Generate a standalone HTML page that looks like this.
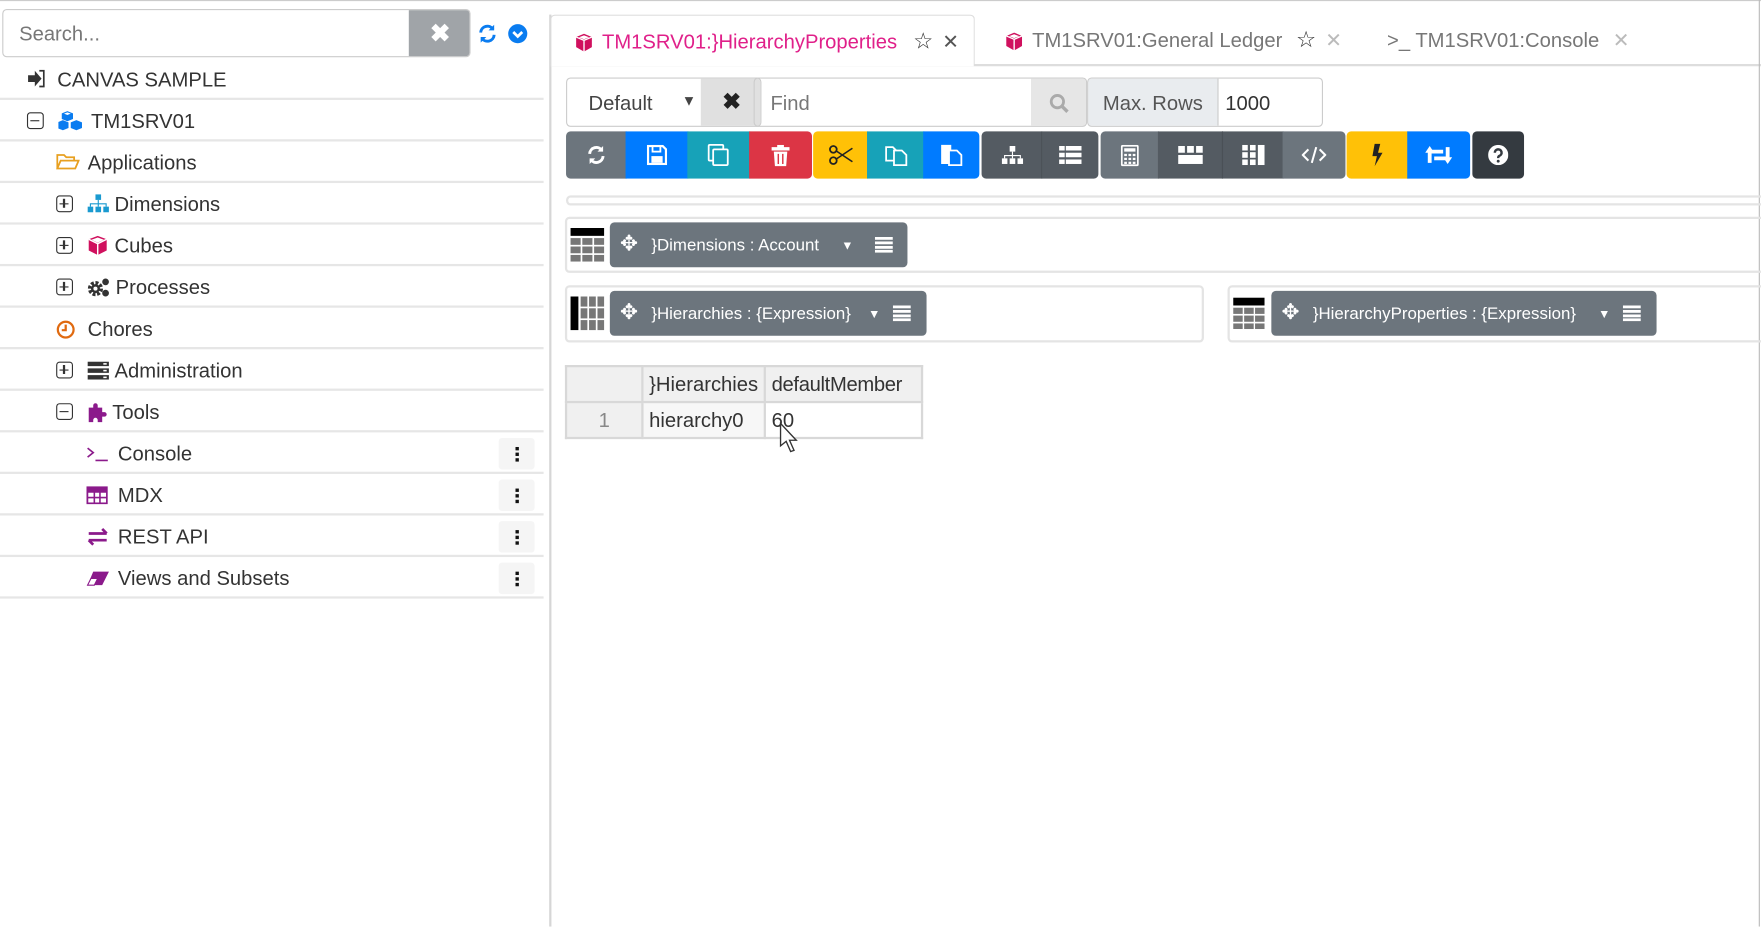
<!DOCTYPE html>
<html><head><meta charset="utf-8"><style>
*{box-sizing:border-box;margin:0;padding:0}
html,body{width:1761px;height:926px;overflow:hidden;background:#fff;font-family:"Liberation Sans",sans-serif;color:#333}
#w{position:absolute;left:0;top:0;width:1568px;height:825px;transform:scale(1.12309);transform-origin:0 0}
.a{position:absolute}
.row{position:absolute;left:0;width:484px;height:37px;border-bottom:2px solid #e6e6e6;font-size:18px;line-height:35px;color:#333}
.row .t{position:absolute;top:2px}
.pm{position:absolute;top:11px;width:15px;height:15px;border:1.5px solid #333;border-radius:3px}
.pm:before{content:"";position:absolute;left:2px;top:5.5px;width:8px;height:1.5px;background:#333}
.pm.p:after{content:"";position:absolute;left:5.3px;top:2px;width:1.5px;height:8px;background:#333}
.dots{position:absolute;left:444px;top:5px;width:32px;height:28px;background:#f5f5f5;border-radius:3px}
.dots i{position:absolute;left:14.5px;width:3px;height:3px;background:#111}
.tab{position:absolute;top:13px;height:45px;font-size:18px;line-height:46px;color:#777}
.btn{position:absolute;top:117px;height:42px;display:flex;align-items:center;justify-content:center}
.pill{position:absolute;background:#6c757d;border-radius:4px;color:#fff;font-size:15px;height:40px;line-height:42px}
.box{position:absolute;border:2px solid #e4e4e4;border-radius:4px}
td{border:2px solid #d8d8d8;font-size:18px;height:32px;padding:0 5px;color:#333}
</style></head><body><div id="w">
<div class="a" style="left:0;top:0;width:1568px;height:1px;background:#ccc"></div>
<div class="a" style="left:2px;top:8px;width:417px;height:43px;border:1.5px solid #ccc;border-radius:4px;overflow:hidden">
 <div class="a" style="left:14px;top:1px;line-height:40px;font-size:18px;color:#777">Search...</div>
 <div class="a" style="left:361px;top:0;width:56px;height:42px;background:#a0a4a8;color:#fff;font-size:22px;line-height:42px;text-align:center;font-weight:bold">✖</div>
</div>
<svg class="a" style="left:425px;top:21px" width="18" height="18" viewBox="0 0 18 18"><path d="M3 8a6 6 0 0 1 11-3M15 10a6 6 0 0 1-11 3" fill="none" stroke="#0a7cf0" stroke-width="2.6"/><path d="M15 1v5h-5zM3 17v-5h5z" fill="#0a7cf0"/></svg>
<svg class="a" style="left:452px;top:21px" width="18" height="18"><circle cx="9" cy="9" r="8.5" fill="#0a7cf0"/><path d="M5 7.5l4 4 4-4" stroke="#fff" stroke-width="2.4" fill="none"/></svg>
<div class="row" style="top:52px"><svg class="a" style="left:24px;top:10px" width="16" height="16"><path d="M1 5h6V1l6 7-6 7v-4H1z" fill="#333"/><path d="M11 1h4v14h-4" fill="none" stroke="#333" stroke-width="1.5"/></svg><span class="t" style="left:51px">CANVAS SAMPLE</span></div>
<div class="row" style="top:89px"><span class="pm" style="left:24px"></span><svg class="a" style="left:52px;top:9px" width="24" height="20"><g fill="#0a7cf0"><path d="M8 1l5 2v5l-5 2-5-2V3z"/><path d="M4 9l5 2v5l-5 2-5-2v-5z"/><path d="M16 9l5 2v5l-5 2-5-2v-5z"/></g><g fill="#fff"><path d="M5 3.2l3 1.2 3-1.2-3-1.1z"/></g></svg><span class="t" style="left:81px">TM1SRV01</span></div>
<div class="row" style="top:126px"><svg class="a" style="left:50px;top:10px" width="21" height="16"><path d="M1 14V2h6l2 2h7v3M1 14l3-7h16l-3 7z" fill="none" stroke="#e8a020" stroke-width="1.6"/></svg><span class="t" style="left:78px">Applications</span></div>
<div class="row" style="top:163px"><span class="pm p" style="left:50px"></span><svg class="a" style="left:78px;top:10px" width="19" height="17"><g fill="#1a9ad0"><rect x="7" y="0" width="5" height="5"/><rect x="0" y="11" width="5" height="5"/><rect x="7" y="11" width="5" height="5"/><rect x="14" y="11" width="5" height="5"/><path d="M9 5h1v3h7v3h-1V9h-6v2H9V9H3v2H2V8h7z"/></g></svg><span class="t" style="left:102px">Dimensions</span></div>
<div class="row" style="top:200px"><span class="pm p" style="left:50px"></span><svg class="a" style="left:78px;top:9px" width="18" height="19"><path d="M9 1l8 3v10l-8 4-8-4V4z" fill="#d0105e"/><path d="M9 8l8-4M9 8L1 4M9 8v10" stroke="#fff" stroke-width="1.3" fill="none"/><path d="M9 2.5l5.5 2L9 7 3.5 4.5z" fill="#fff"/></svg><span class="t" style="left:102px">Cubes</span></div>
<div class="row" style="top:237px"><span class="pm p" style="left:50px"></span><svg class="a" style="left:78px;top:9px" width="22" height="20"><circle cx="7" cy="11" r="5" fill="none" stroke="#333" stroke-width="3.5" stroke-dasharray="2.5 1.4"/><circle cx="7" cy="11" r="4" fill="#333"/><circle cx="7" cy="11" r="1.8" fill="#fff"/><circle cx="16" cy="5" r="3" fill="#333"/><circle cx="16" cy="15" r="3" fill="#333"/></svg><span class="t" style="left:103px">Processes</span></div>
<div class="row" style="top:274px"><svg class="a" style="left:50px;top:11px" width="17" height="17"><circle cx="8.5" cy="8.5" r="7" fill="none" stroke="#e06a10" stroke-width="2"/><path d="M8.5 4v5H5" stroke="#e06a10" stroke-width="2" fill="none"/></svg><span class="t" style="left:78px">Chores</span></div>
<div class="row" style="top:311px"><span class="pm p" style="left:50px"></span><svg class="a" style="left:78px;top:11px" width="19" height="16"><g fill="#333"><rect width="19" height="4"/><rect y="6" width="19" height="4"/><rect y="12" width="19" height="4"/></g><g fill="#fff"><rect x="14" y="1.3" width="3" height="1.4"/><rect x="14" y="7.3" width="3" height="1.4"/><rect x="14" y="13.3" width="3" height="1.4"/></g></svg><span class="t" style="left:102px">Administration</span></div>
<div class="row" style="top:348px"><span class="pm" style="left:50px"></span><svg class="a" style="left:78px;top:10px" width="20" height="18"><path d="M1 5h4V3a2 2 0 1 1 4 0v2h4v4h2a2 2 0 1 1 0 4h-2v5H9v-2a2 2 0 1 0-4 0v2H1z" fill="#8b1a8b"/></svg><span class="t" style="left:100px">Tools</span></div>
<div class="row" style="top:385px"><svg class="a" style="left:77px;top:12px" width="20" height="14"><path d="M1 2l5 4-5 4" stroke="#8b1a8b" stroke-width="1.5" fill="none"/><path d="M8 13h11" stroke="#8b1a8b" stroke-width="1.5"/></svg><span class="t" style="left:105px">Console</span><div class="dots"><i style="top:8px"></i><i style="top:13px"></i><i style="top:18px"></i></div></div>
<div class="row" style="top:422px"><svg class="a" style="left:77px;top:11px" width="19" height="16"><rect x=".8" y=".8" width="17.4" height="14.4" fill="none" stroke="#8b1a8b" stroke-width="1.6"/><path d="M1 5h17M1 10h17M7 1v14M12 1v14" stroke="#8b1a8b" stroke-width="1.4"/><rect x="1" y="1" width="17" height="4" fill="#8b1a8b"/></svg><span class="t" style="left:105px">MDX</span><div class="dots"><i style="top:8px"></i><i style="top:13px"></i><i style="top:18px"></i></div></div>
<div class="row" style="top:459px"><svg class="a" style="left:77px;top:11px" width="20" height="16"><path d="M2 5h16M14 1l4 4M2 11h16M6 15l-4-4" stroke="#8b1a8b" stroke-width="2.4" fill="none"/></svg><span class="t" style="left:105px">REST API</span><div class="dots"><i style="top:8px"></i><i style="top:13px"></i><i style="top:18px"></i></div></div>
<div class="row" style="top:496px"><svg class="a" style="left:77px;top:12px" width="21" height="14"><path d="M6 1h14l-6 12H1z" fill="#8b1a8b"/><path d="M1 13l3-6h6l-3 6z" fill="#fff" stroke="#8b1a8b" stroke-width="1"/></svg><span class="t" style="left:105px">Views and Subsets</span><div class="dots"><i style="top:8px"></i><i style="top:13px"></i><i style="top:18px"></i></div></div>
<div class="a" style="left:489px;top:13px;width:2px;height:812px;background:#d6d6d6"></div>
<div class="a" style="left:490px;top:57px;width:1078px;height:1.5px;background:#ddd"></div>
<div class="a" style="left:1566px;top:0;width:1px;height:825px;background:#bbb"></div>
<div class="tab" style="left:490px;width:378px;border:1.5px solid #ddd;border-bottom:none;border-radius:4px 4px 0 0;background:#fff;height:46px;color:#e0208a">
 <svg class="a" style="left:21px;top:15px" width="16" height="18"><path d="M8 1l7 3v9l-7 4-7-4V4z" fill="#d0105e"/><path d="M8 7l7-3M8 7L1 4M8 7v10" stroke="#fff" stroke-width="1.2" fill="none"/><path d="M8 2.5l4.5 1.7L8 6 3.5 4.2z" fill="#fff"/></svg>
 <span class="a" style="left:45px">TM1SRV01:}HierarchyProperties</span><span class="a" style="left:322px;color:#333;font-size:20px">☆</span><span class="a" style="left:348px;color:#555">✕</span></div>
<div class="tab" style="left:895px">
 <svg class="a" style="left:0;top:15px" width="16" height="18"><path d="M8 1l7 3v9l-7 4-7-4V4z" fill="#d0105e"/><path d="M8 7l7-3M8 7L1 4M8 7v10" stroke="#fff" stroke-width="1.2" fill="none"/><path d="M8 2.5l4.5 1.7L8 6 3.5 4.2z" fill="#fff"/></svg>
 <span class="a" style="left:24px;white-space:nowrap">TM1SRV01:General Ledger</span><span class="a" style="left:259px;color:#333;font-size:20px">☆</span><span class="a" style="left:285px;color:#bbb">✕</span></div>
<div class="tab" style="left:1235px;white-space:nowrap"><span>&gt;_ TM1SRV01:Console</span><span class="a" style="left:201px;color:#bbb">✕</span></div>
<div class="a" style="left:504px;top:69px;width:174px;height:44px;border:1.5px solid #ccc;border-radius:4px;overflow:hidden">
 <span class="a" style="left:19px;top:1px;line-height:42px;font-size:18px;color:#444">Default</span><span class="a" style="left:102px;line-height:40px;font-size:13px;color:#444">▼</span>
 <div class="a" style="left:119px;top:0;width:55px;height:42px;background:#e0e0e0;text-align:center;line-height:42px;font-size:20px;font-weight:bold;color:#222">✖</div></div>
<div class="a" style="left:671px;top:69px;width:297px;height:44px;border:1.5px solid #ccc;border-radius:4px;overflow:hidden">
 <span class="a" style="left:14px;top:1px;line-height:42px;font-size:18px;color:#777">Find</span>
 <div class="a" style="left:246px;top:0;width:50px;height:42px;background:#e6e6e6"><svg class="a" style="left:16px;top:13px" width="18" height="18"><circle cx="7.5" cy="7.5" r="5.5" stroke="#aaa" stroke-width="2.5" fill="none"/><path d="M11.5 11.5l5 5" stroke="#aaa" stroke-width="3"/></svg></div></div>
<div class="a" style="left:968px;top:69px;width:210px;height:44px;border:1.5px solid #ccc;border-radius:4px;overflow:hidden">
 <div class="a" style="left:0;top:0;width:116px;height:42px;background:#e9ecef;border-right:1.5px solid #ccc;text-align:center;line-height:44px;font-size:18px;color:#555">Max. Rows</div>
 <span class="a" style="left:122px;top:1px;line-height:42px;font-size:18px;color:#333">1000</span></div>
<div class="btn" style="left:504px;width:54px;background:#6c757d;border-radius:4px 0 0 4px"><svg width="18" height="18" viewBox="0 0 18 18"><path d="M3 8a6 6 0 0 1 11-3M15 10a6 6 0 0 1-11 3" fill="none" stroke="#fff" stroke-width="2.6"/><path d="M15 1v5h-5zM3 17v-5h5z" fill="#fff"/></svg></div>
<div class="btn" style="left:557px;width:56px;background:#007bff"><svg width="18" height="18"><path d="M1 1h13l3 3v13H1z" fill="none" stroke="#fff" stroke-width="2"/><rect x="5" y="1" width="7" height="5" fill="none" stroke="#fff" stroke-width="1.6"/><rect x="4" y="10" width="10" height="6" fill="#fff"/></svg></div>
<div class="btn" style="left:612px;width:56px;background:#17a2b8"><svg width="20" height="20"><rect x="1" y="1" width="13" height="14" rx="1" fill="none" stroke="#fff" stroke-width="1.6"/><rect x="5" y="5" width="13" height="14" rx="1" fill="#17a2b8" stroke="#fff" stroke-width="1.6"/></svg></div>
<div class="btn" style="left:667px;width:56px;background:#dc3545;border-radius:0 4px 4px 0"><svg width="16" height="19"><rect x="0" y="2" width="16" height="3" fill="#fff"/><rect x="5" y="0" width="6" height="3" fill="#fff"/><path d="M2 6h12l-1 13H3z" fill="#fff"/><path d="M6 8v9M10 8v9" stroke="#dc3545" stroke-width="1.3"/></svg></div>
<div class="btn" style="left:724px;width:49px;background:#ffc107;border-radius:4px 0 0 4px"><svg width="22" height="18"><circle cx="4" cy="4" r="3" fill="none" stroke="#222" stroke-width="1.6"/><circle cx="4" cy="14" r="3" fill="none" stroke="#222" stroke-width="1.6"/><path d="M6 5l15 10M6 13L21 3" stroke="#222" stroke-width="1.4"/></svg></div>
<div class="btn" style="left:772px;width:51px;background:#17a2b8"><svg width="22" height="20"><path d="M2 3h6l4 4v8H2z" fill="none" stroke="#fff" stroke-width="1.6"/><path d="M9 6h7l4 4v9H9z" fill="#17a2b8" stroke="#fff" stroke-width="1.6"/></svg></div>
<div class="btn" style="left:822px;width:50px;background:#007bff;border-radius:0 4px 4px 0"><svg width="22" height="20"><path d="M2 1h9v17H2z" fill="#fff"/><path d="M9 6h7l4 4v9H9z" fill="#007bff" stroke="#fff" stroke-width="1.6"/></svg></div>
<div class="btn" style="left:874px;width:54px;background:#545b62;border-radius:4px 0 0 4px"><svg width="19" height="17"><g fill="#fff"><rect x="7" y="0" width="5" height="5"/><rect x="0" y="11" width="5" height="5"/><rect x="7" y="11" width="5" height="5"/><rect x="14" y="11" width="5" height="5"/><path d="M9 5h1v3h7v3h-1V9h-6v2H9V9H3v2H2V8h7z"/></g></svg></div>
<div class="btn" style="left:927px;width:51px;background:#545b62;border-radius:0 4px 4px 0;border-left:1px solid #4a5056"><svg width="20" height="16"><g fill="#fff"><rect width="5" height="4"/><rect x="6" width="14" height="4"/><rect y="6" width="5" height="4"/><rect x="6" y="6" width="14" height="4"/><rect y="12" width="5" height="4"/><rect x="6" y="12" width="14" height="4"/></g></svg></div>
<div class="btn" style="left:980px;width:52px;background:#6c757d;border-radius:4px 0 0 4px"><svg width="16" height="19"><rect x=".8" y=".8" width="14.4" height="17.4" rx="1" fill="none" stroke="#fff" stroke-width="1.6"/><rect x="3" y="3" width="10" height="3" fill="#fff"/><g fill="#fff"><rect x="3" y="8" width="2.4" height="2"/><rect x="6.8" y="8" width="2.4" height="2"/><rect x="10.6" y="8" width="2.4" height="2"/><rect x="3" y="11.5" width="2.4" height="2"/><rect x="6.8" y="11.5" width="2.4" height="2"/><rect x="10.6" y="11.5" width="2.4" height="2"/><rect x="3" y="15" width="2.4" height="2"/><rect x="6.8" y="15" width="2.4" height="2"/><rect x="10.6" y="15" width="2.4" height="2"/></g></svg></div>
<div class="btn" style="left:1031px;width:58px;background:#545b62"><svg width="22" height="16"><g fill="#fff"><rect width="6" height="6"/><rect x="8" width="6" height="6"/><rect x="16" width="6" height="6"/><rect y="8" width="22" height="8"/></g></svg></div>
<div class="btn" style="left:1088px;width:55px;background:#545b62;border-left:1px solid #4a5056"><svg width="20" height="18"><g fill="#fff"><rect width="5" height="5"/><rect x="7" width="5" height="5"/><rect y="6.5" width="5" height="5"/><rect x="7" y="6.5" width="5" height="5"/><rect y="13" width="5" height="5"/><rect x="7" y="13" width="5" height="5"/><rect x="14" width="6" height="18"/></g></svg></div>
<div class="btn" style="left:1142px;width:56px;background:#6c757d;border-radius:0 4px 4px 0"><svg width="22" height="16"><path d="M6 3L1 8l5 5M16 3l5 5-5 5M13 1L9 15" stroke="#fff" stroke-width="1.8" fill="none"/></svg></div>
<div class="btn" style="left:1199px;width:55px;background:#ffc107;border-radius:4px 0 0 4px"><svg width="12" height="20"><path d="M3 0h5L6 8h4L3 20l2-9H1z" fill="#222"/></svg></div>
<div class="btn" style="left:1253px;width:56px;background:#007bff;border-radius:0 4px 4px 0"><svg width="24" height="18"><path d="M4 16V6h12M20 2v10H8" stroke="#fff" stroke-width="3.4" fill="none"/><path d="M0 7l4-6 4 6zM16 11l4 6 4-6z" fill="#fff"/></svg></div>
<div class="btn" style="left:1311px;width:46px;background:#343a40;border-radius:4px"><svg width="18" height="18"><circle cx="9" cy="9" r="9" fill="#fff"/><path d="M6 7a3 3 0 1 1 4 2.8c-1 .4-1 1-1 2" stroke="#343a40" stroke-width="2.2" fill="none"/><circle cx="9" cy="14.5" r="1.3" fill="#343a40"/></svg></div>
<div class="box" style="left:504px;top:174px;width:1070px;height:9px;border-radius:4px"></div>
<div class="box" style="left:503px;top:193px;width:1070px;height:50px"></div>
<svg class="a" style="left:508px;top:203px" width="30" height="30"><rect width="30" height="7" fill="#000"/><g fill="#777"><rect y="9" width="9" height="6"/><rect x="10.5" y="9" width="9" height="6"/><rect x="21" y="9" width="9" height="6"/><rect y="16.5" width="9" height="6"/><rect x="10.5" y="16.5" width="9" height="6"/><rect x="21" y="16.5" width="9" height="6"/><rect y="24" width="9" height="6"/><rect x="10.5" y="24" width="9" height="6"/><rect x="21" y="24" width="9" height="6"/></g></svg>
<div class="pill" style="left:543px;top:198px;width:265px"><span class="a" style="left:9px;top:-1px;font-size:19px">✥</span><span class="a" style="left:37px;white-space:nowrap">}Dimensions : Account</span><span class="a" style="left:206px;font-size:11px">▼</span><svg class="a" style="left:236px;top:13px" width="16" height="14"><g fill="#fff"><rect width="16" height="2.5"/><rect y="4" width="16" height="2.5"/><rect y="8" width="16" height="2.5"/><rect y="11.5" width="16" height="2.5"/></g></svg></div>
<div class="box" style="left:503px;top:254px;width:569px;height:51px"></div>
<svg class="a" style="left:508px;top:264px" width="30" height="30"><rect width="7" height="30" fill="#000"/><g fill="#777"><rect x="9" width="6" height="9"/><rect x="16.5" width="6" height="9"/><rect x="24" width="6" height="9"/><rect x="9" y="10.5" width="6" height="9"/><rect x="16.5" y="10.5" width="6" height="9"/><rect x="24" y="10.5" width="6" height="9"/><rect x="9" y="21" width="6" height="9"/><rect x="16.5" y="21" width="6" height="9"/><rect x="24" y="21" width="6" height="9"/></g></svg>
<div class="pill" style="left:543px;top:259px;width:282px"><span class="a" style="left:9px;top:-1px;font-size:19px">✥</span><span class="a" style="left:37px;white-space:nowrap">}Hierarchies : {Expression}</span><span class="a" style="left:230px;font-size:11px">▼</span><svg class="a" style="left:252px;top:13px" width="16" height="14"><g fill="#fff"><rect width="16" height="2.5"/><rect y="4" width="16" height="2.5"/><rect y="8" width="16" height="2.5"/><rect y="11.5" width="16" height="2.5"/></g></svg></div>
<div class="box" style="left:1093px;top:254px;width:480px;height:51px"></div>
<svg class="a" style="left:1098px;top:265px" width="28" height="28"><rect width="28" height="7" fill="#000"/><g fill="#777"><rect y="9" width="8.5" height="5.5"/><rect x="9.8" y="9" width="8.5" height="5.5"/><rect x="19.5" y="9" width="8.5" height="5.5"/><rect y="16" width="8.5" height="5.5"/><rect x="9.8" y="16" width="8.5" height="5.5"/><rect x="19.5" y="16" width="8.5" height="5.5"/><rect y="23" width="8.5" height="5"/><rect x="9.8" y="23" width="8.5" height="5"/><rect x="19.5" y="23" width="8.5" height="5"/></g></svg>
<div class="pill" style="left:1132px;top:259px;width:343px"><span class="a" style="left:9px;top:-1px;font-size:19px">✥</span><span class="a" style="left:37px;white-space:nowrap">}HierarchyProperties : {Expression}</span><span class="a" style="left:291px;font-size:11px">▼</span><svg class="a" style="left:313px;top:13px" width="16" height="14"><g fill="#fff"><rect width="16" height="2.5"/><rect y="4" width="16" height="2.5"/><rect y="8" width="16" height="2.5"/><rect y="11.5" width="16" height="2.5"/></g></svg></div>
<table class="a" style="left:503px;top:325px;border-collapse:collapse">
<tr style="background:#f0f0f0"><td style="width:68px"></td><td style="width:107px">}Hierarchies</td><td style="width:140px;white-space:nowrap;letter-spacing:-0.3px">defaultMember</td></tr>
<tr><td style="background:#f0f0f0;text-align:center;color:#888">1</td><td style="background:#f7f7f7">hierarchy0</td><td>60</td></tr>
</table>
<svg class="a" style="left:694px;top:376px" width="18" height="28"><path d="M1 1v20l5-4 4 9 3-1-4-9h6z" fill="#fff" stroke="#333" stroke-width="1.2"/></svg>
</div></body></html>
